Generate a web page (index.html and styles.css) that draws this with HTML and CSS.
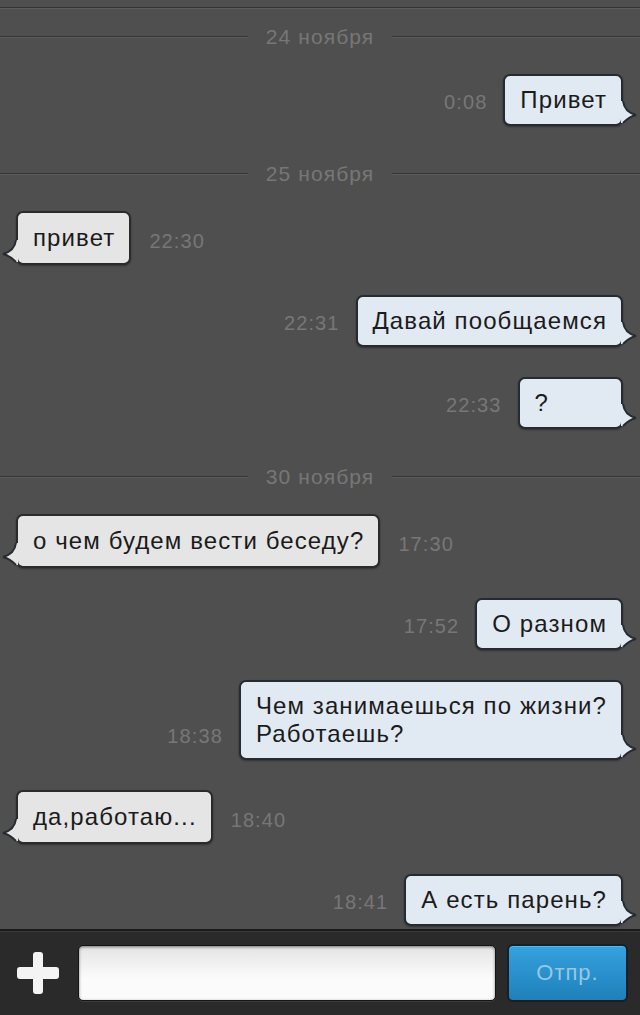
FILE: index.html
```html
<!DOCTYPE html>
<html>
<head>
    <link rel="stylesheet" href="styles.css">
</head>
<body>
    <div class="chat">
        <div class="rule"></div>

        <div class="day"><span>24 ноября</span></div>
        <div class="msg out">
            <span class="time">0:08</span>
            <div class="bubble">Привет<svg class="tail" width="16" height="26" viewBox="0 0 16 26"><path class="tail-fill" d="M0 1 L2 1 C3 9 7 13 15 15 C10 16 6 19 2 23 L0 23 Z"/><path class="tail-line" d="M2 1 C3 9 7 13 15 15 C10 16 6 19 2 23"/></svg></div>
        </div>

        <div class="day"><span>25 ноября</span></div>
        <div class="msg in">
            <div class="bubble">привет<svg class="tail" width="16" height="26" viewBox="0 0 16 26"><path class="tail-fill" d="M0 1 L2 1 C3 9 7 13 15 15 C10 16 6 19 2 23 L0 23 Z"/><path class="tail-line" d="M2 1 C3 9 7 13 15 15 C10 16 6 19 2 23"/></svg></div>
            <span class="time">22:30</span>
        </div>
        <div class="msg out">
            <span class="time">22:31</span>
            <div class="bubble">Давай пообщаемся<svg class="tail" width="16" height="26" viewBox="0 0 16 26"><path class="tail-fill" d="M0 1 L2 1 C3 9 7 13 15 15 C10 16 6 19 2 23 L0 23 Z"/><path class="tail-line" d="M2 1 C3 9 7 13 15 15 C10 16 6 19 2 23"/></svg></div>
        </div>
        <div class="msg out">
            <span class="time">22:33</span>
            <div class="bubble wide">?<svg class="tail" width="16" height="26" viewBox="0 0 16 26"><path class="tail-fill" d="M0 1 L2 1 C3 9 7 13 15 15 C10 16 6 19 2 23 L0 23 Z"/><path class="tail-line" d="M2 1 C3 9 7 13 15 15 C10 16 6 19 2 23"/></svg></div>
        </div>

        <div class="day"><span>30 ноября</span></div>
        <div class="msg in">
            <div class="bubble">о чем будем вести беседу?<svg class="tail" width="16" height="26" viewBox="0 0 16 26"><path class="tail-fill" d="M0 1 L2 1 C3 9 7 13 15 15 C10 16 6 19 2 23 L0 23 Z"/><path class="tail-line" d="M2 1 C3 9 7 13 15 15 C10 16 6 19 2 23"/></svg></div>
            <span class="time">17:30</span>
        </div>
        <div class="msg out">
            <span class="time">17:52</span>
            <div class="bubble">О разном<svg class="tail" width="16" height="26" viewBox="0 0 16 26"><path class="tail-fill" d="M0 1 L2 1 C3 9 7 13 15 15 C10 16 6 19 2 23 L0 23 Z"/><path class="tail-line" d="M2 1 C3 9 7 13 15 15 C10 16 6 19 2 23"/></svg></div>
        </div>
        <div class="msg out">
            <span class="time">18:38</span>
            <div class="bubble">Чем занимаешься по жизни?<br>Работаешь?<svg class="tail" width="16" height="26" viewBox="0 0 16 26"><path class="tail-fill" d="M0 1 L2 1 C3 9 7 13 15 15 C10 16 6 19 2 23 L0 23 Z"/><path class="tail-line" d="M2 1 C3 9 7 13 15 15 C10 16 6 19 2 23"/></svg></div>
        </div>
        <div class="msg in">
            <div class="bubble">да,работаю...<svg class="tail" width="16" height="26" viewBox="0 0 16 26"><path class="tail-fill" d="M0 1 L2 1 C3 9 7 13 15 15 C10 16 6 19 2 23 L0 23 Z"/><path class="tail-line" d="M2 1 C3 9 7 13 15 15 C10 16 6 19 2 23"/></svg></div>
            <span class="time">18:40</span>
        </div>
        <div class="msg out">
            <span class="time">18:41</span>
            <div class="bubble">А есть парень?<svg class="tail" width="16" height="26" viewBox="0 0 16 26"><path class="tail-fill" d="M0 1 L2 1 C3 9 7 13 15 15 C10 16 6 19 2 23 L0 23 Z"/><path class="tail-line" d="M2 1 C3 9 7 13 15 15 C10 16 6 19 2 23"/></svg></div>
        </div>
    </div>

    <div class="composer">
        <svg class="plus" width="42" height="42" viewBox="0 0 42 42"><path d="M16 3 Q16 0 19 0 L23 0 Q26 0 26 3 L26 15 L39 15 Q42 15 42 18 L42 24 Q42 27 39 27 L26 27 L26 39 Q26 42 23 42 L19 42 Q16 42 16 39 L16 27 L3 27 Q0 27 0 24 L0 18 Q0 15 3 15 L16 15 Z"/></svg>
        <div class="field"></div>
        <button class="send">Отпр.</button>
    </div>
</body>
</html>
```

FILE: styles.css
```css
html, body {
    margin: 0;
    padding: 0;
}
body {
    width: 640px;
    height: 1015px;
    overflow: hidden;
    display: flex;
    flex-direction: column;
    background: #4f4f4f;
    font-family: "Liberation Sans", Arial, sans-serif;
}
.chat {
    flex: 1;
    overflow: hidden;
}
.rule {
    margin-top: 7px;
    height: 1px;
    background: #353535;
    border-bottom: 1px solid #5c5c5c;
}
.day {
    display: flex;
    align-items: center;
    height: 22px;
    margin: 17px 0 26px;
    color: #777;
    font-size: 21px;
    letter-spacing: 1.1px;
}
.day::before,
.day::after {
    content: "";
    flex: 1;
    height: 1px;
    background: #353535;
    border-bottom: 1px solid #5c5c5c;
}
.day span {
    padding: 0 18px;
}
.msg + .day {
    margin-top: 37px;
}
.msg {
    display: flex;
    align-items: flex-end;
    margin-bottom: 30px;
}
.msg.out {
    justify-content: flex-end;
    padding-right: 17px;
}
.msg.in {
    padding-left: 16px;
}
.time {
    color: #777;
    font-size: 20px;
    letter-spacing: 1.1px;
    line-height: 22px;
    margin-bottom: 13px;
}
.msg.out .time {
    margin-right: 16px;
}
.msg.in .time {
    margin-left: 18px;
}
.bubble {
    position: relative;
    font-size: 24px;
    letter-spacing: 1.1px;
    line-height: 28px;
    padding: 10px 14px 10px 15px;
    border: 2px solid #262b31;
    border-radius: 7px;
    color: #1b1b1b;
    box-shadow: 0 1px 2px rgba(0, 0, 0, 0.35);
}
.bubble.wide {
    padding-right: 72px;
}
.msg.out .bubble {
    background: #e1e9f3;
}
.msg.in .bubble {
    background: #e5e5e5;
    border-color: #2b2b2b;
    padding-top: 11px;
    padding-bottom: 11px;
}
.tail {
    position: absolute;
    bottom: -2px;
    right: -16px;
    overflow: visible;
}
.msg.in .tail {
    right: auto;
    left: -16px;
    transform: scaleX(-1);
}
.tail-line {
    fill: none;
    stroke: #262b31;
    stroke-width: 2;
}
.msg.out .tail-fill {
    fill: #e1e9f3;
}
.msg.in .tail-fill {
    fill: #e5e5e5;
}

.composer {
    height: 84px;
    flex-shrink: 0;
    display: flex;
    align-items: center;
    gap: 11px;
    padding: 0 12px 0 17px;
    background: #2a2a2a;
    border-top: 2px solid #1a1a1a;
    box-shadow: inset 0 1px 0 #3a3a3a;
}
.plus {
    fill: #f4f4f4;
    margin-right: 8px;
    flex-shrink: 0;
}
.field {
    flex: 1;
    height: 54px;
    border-radius: 5px;
    background: linear-gradient(#e4e4e4, #fbfbfb 60%);
    box-shadow: inset 0 1px 3px rgba(0, 0, 0, 0.5), 0 1px 0 #3b3b3b;
    border: 1px solid #151515;
}
.send {
    width: 121px;
    height: 58px;
    border: 2px solid #14202a;
    border-radius: 6px;
    background: linear-gradient(#35a2de, #1f80bb);
    color: #93c8e8;
    font-family: "Liberation Sans", Arial, sans-serif;
    font-size: 22px;
    letter-spacing: 1px;
    box-shadow: inset 0 1px 0 #5ab6e8;
}
```
